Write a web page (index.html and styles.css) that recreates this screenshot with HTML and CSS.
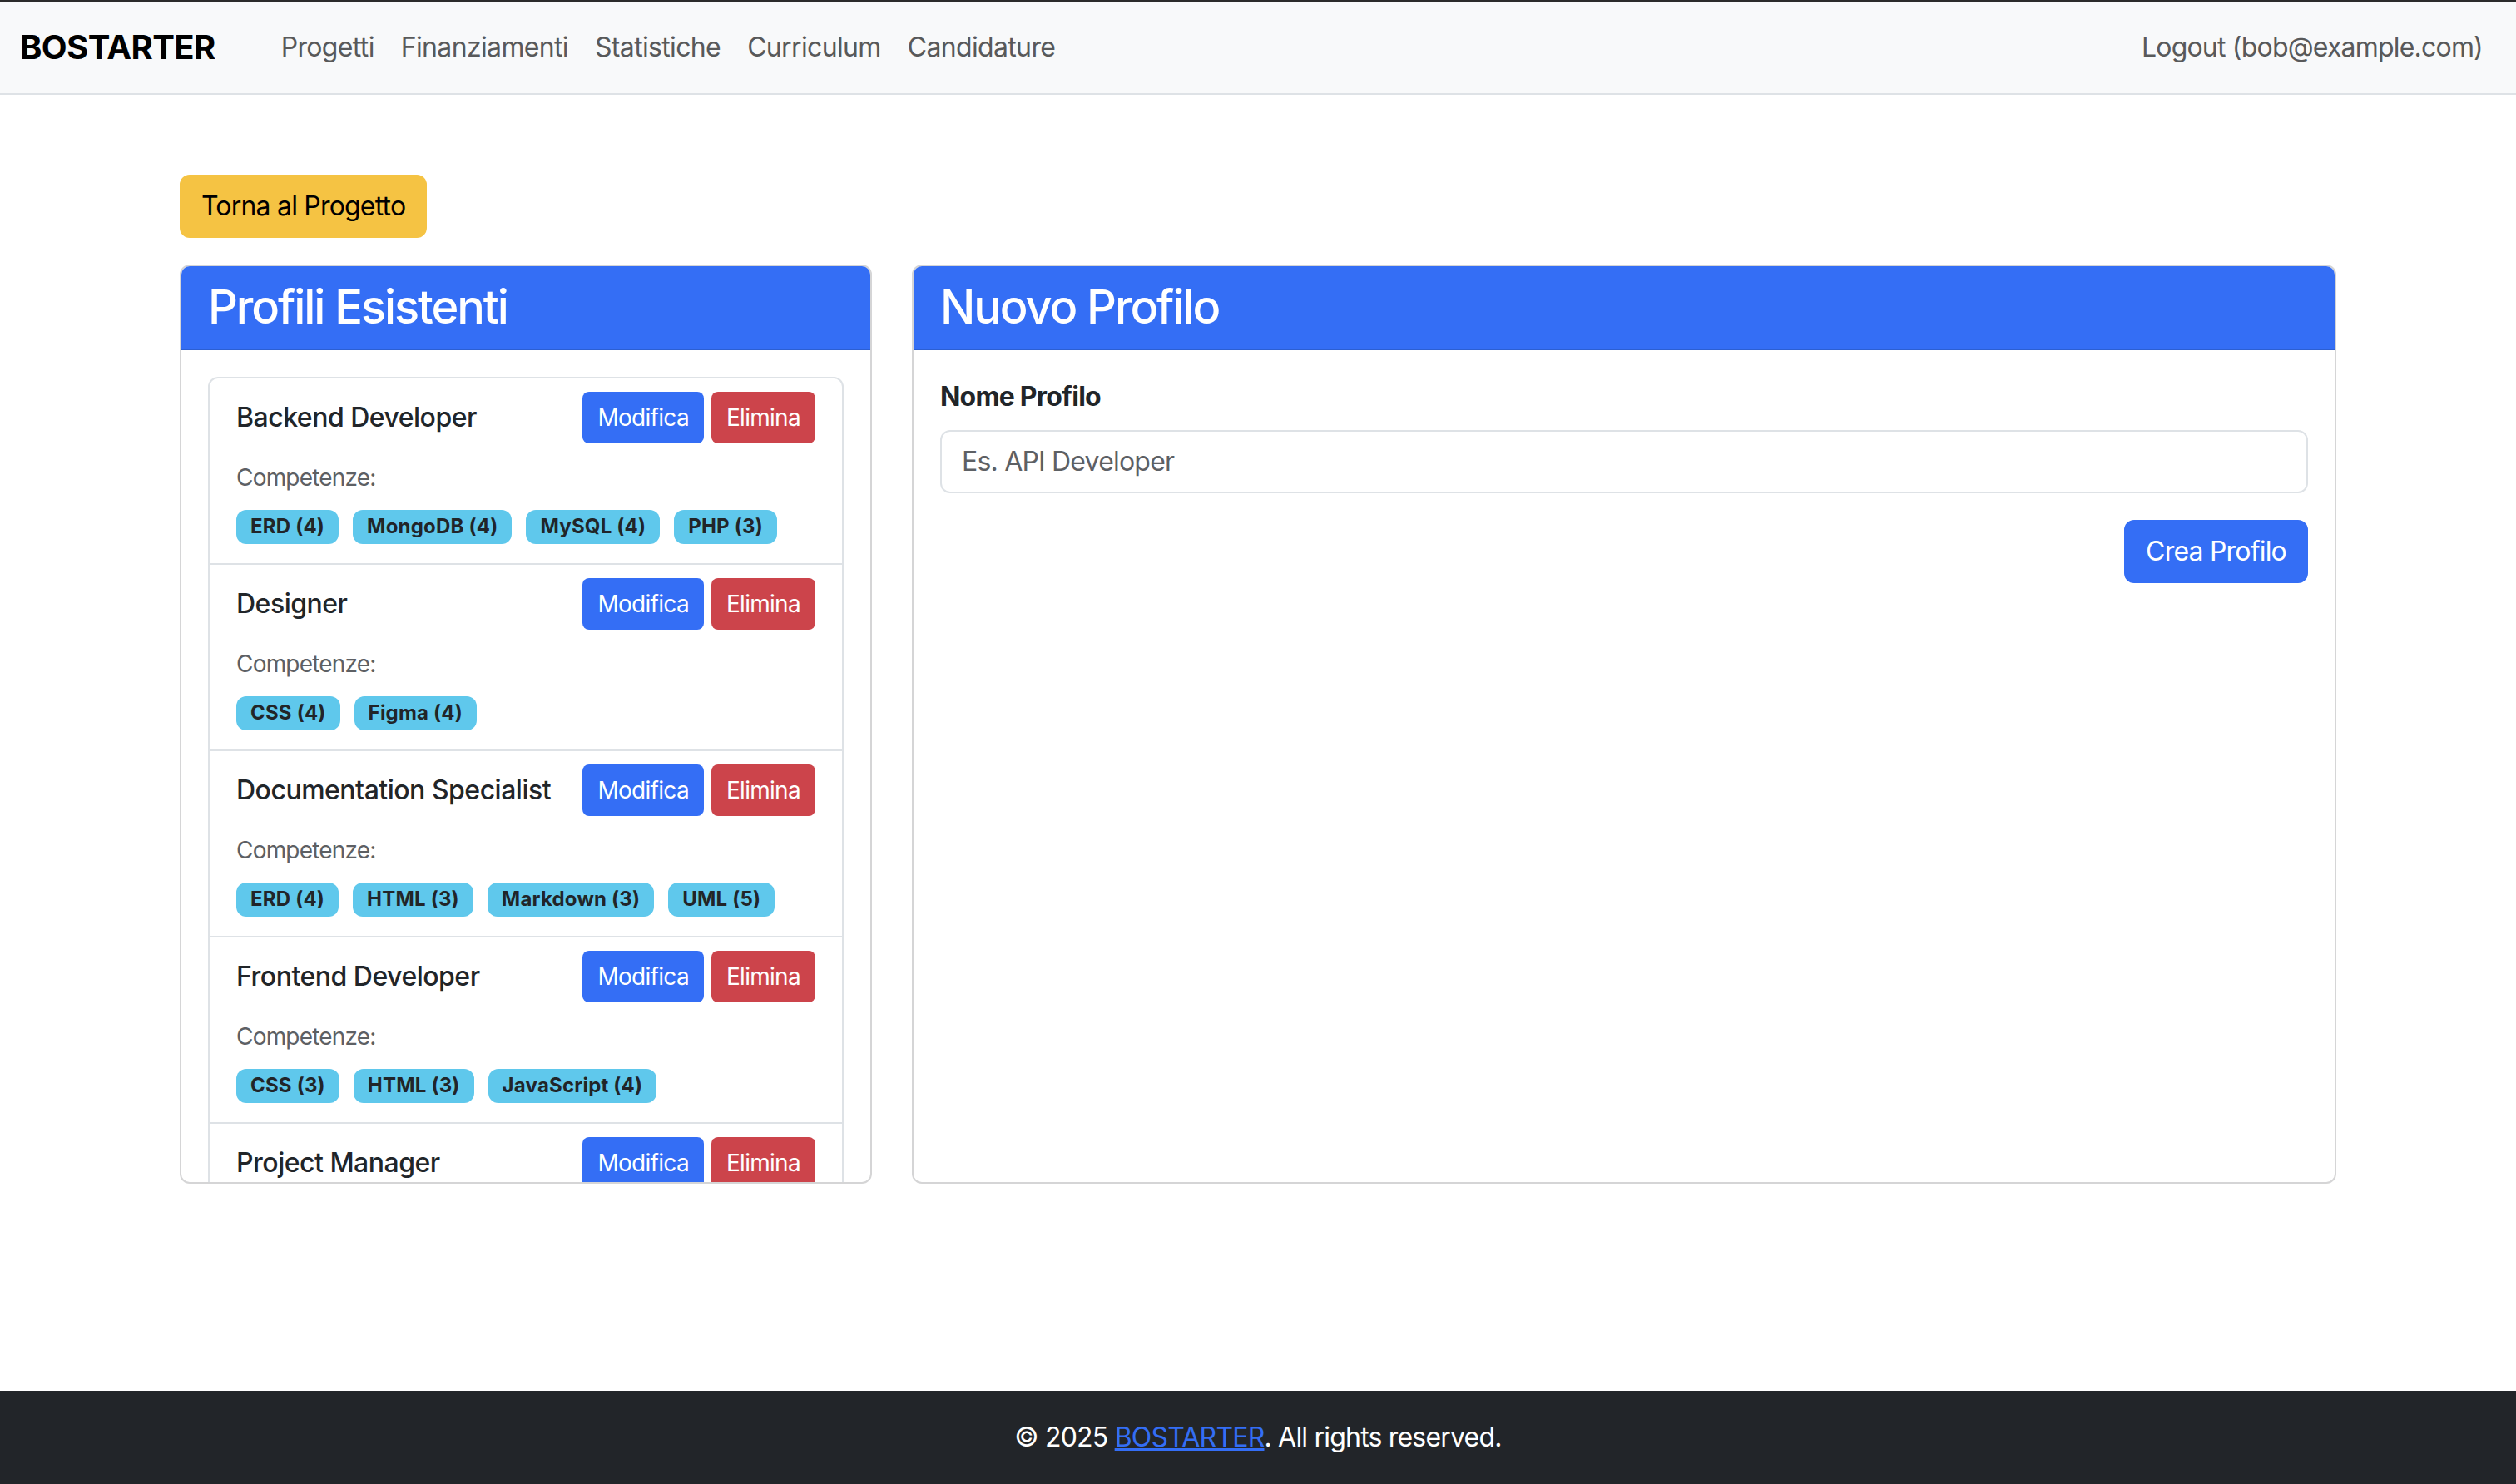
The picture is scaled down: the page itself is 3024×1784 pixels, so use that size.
FILE: index.html
```html
<!DOCTYPE html>
<html lang="it">
<head>
<meta charset="utf-8">
<title>BOSTARTER - Profili</title>
<link rel="stylesheet" href="styles.css">
</head>
<body>
<nav class="navbar">
  <a class="brand" href="#">BOSTARTER</a>
  <ul class="nav-links">
    <li><a href="#">Progetti</a></li>
    <li><a href="#">Finanziamenti</a></li>
    <li><a href="#">Statistiche</a></li>
    <li><a href="#">Curriculum</a></li>
    <li><a href="#">Candidature</a></li>
  </ul>
  <a class="nav-logout" href="#">Logout (bob@example.com)</a>
</nav>

<main class="container">
  <div class="back-row"><a class="btn btn-warning" href="#">Torna al Progetto</a></div>
  <div class="row">
    <section class="col-left">
      <div class="card">
        <div class="card-header"><h3>Profili Esistenti</h3></div>
        <div class="card-body card-scroll">
          <ul class="list-group">
            <li class="list-item">
              <div class="item-head">
                <h6>Backend Developer</h6>
                <div class="actions"><button class="btn-sm btn-primary">Modifica</button><button class="btn-sm btn-danger">Elimina</button></div>
              </div>
              <div class="skills-label"><small>Competenze:</small></div>
              <div class="skills"><span class="badge">ERD (4)</span><span class="badge">MongoDB (4)</span><span class="badge">MySQL (4)</span><span class="badge">PHP (3)</span></div>
            </li>
            <li class="list-item">
              <div class="item-head">
                <h6>Designer</h6>
                <div class="actions"><button class="btn-sm btn-primary">Modifica</button><button class="btn-sm btn-danger">Elimina</button></div>
              </div>
              <div class="skills-label"><small>Competenze:</small></div>
              <div class="skills"><span class="badge">CSS (4)</span><span class="badge">Figma (4)</span></div>
            </li>
            <li class="list-item">
              <div class="item-head">
                <h6>Documentation Specialist</h6>
                <div class="actions"><button class="btn-sm btn-primary">Modifica</button><button class="btn-sm btn-danger">Elimina</button></div>
              </div>
              <div class="skills-label"><small>Competenze:</small></div>
              <div class="skills"><span class="badge">ERD (4)</span><span class="badge">HTML (3)</span><span class="badge">Markdown (3)</span><span class="badge">UML (5)</span></div>
            </li>
            <li class="list-item">
              <div class="item-head">
                <h6>Frontend Developer</h6>
                <div class="actions"><button class="btn-sm btn-primary">Modifica</button><button class="btn-sm btn-danger">Elimina</button></div>
              </div>
              <div class="skills-label"><small>Competenze:</small></div>
              <div class="skills"><span class="badge">CSS (3)</span><span class="badge">HTML (3)</span><span class="badge">JavaScript (4)</span></div>
            </li>
            <li class="list-item">
              <div class="item-head">
                <h6>Project Manager</h6>
                <div class="actions"><button class="btn-sm btn-primary">Modifica</button><button class="btn-sm btn-danger">Elimina</button></div>
              </div>
            </li>
          </ul>
        </div>
      </div>
    </section>
    <section class="col-right">
      <div class="card card-full">
        <div class="card-header"><h3>Nuovo Profilo</h3></div>
        <div class="card-body">
          <form class="profile-form">
            <label class="form-label" for="nome">Nome Profilo</label>
            <input class="form-control" id="nome" type="text" placeholder="Es. API Developer">
            <div class="form-actions"><button type="button" class="btn btn-primary">Crea Profilo</button></div>
          </form>
        </div>
      </div>
    </section>
  </div>
</main>

<footer class="footer">
  <p>© 2025 <a href="#">BOSTARTER</a>. All rights reserved.</p>
</footer>
</body>
</html>
```
FILE: styles.css
```css
* { box-sizing: border-box; }

html, body { margin: 0; padding: 0; }

body {
  font-family: Inter, "Liberation Sans", sans-serif;
  font-size: 32px;
  line-height: 1.5;
  letter-spacing: -0.025em;
  color: #212529;
  background: #ffffff;
  min-height: 100vh;
  display: flex;
  flex-direction: column;
}

/* Navbar */
.navbar {
  display: flex;
  align-items: center;
  background: #f8f9fa;
  border-top: 2px solid #2b2b2b;
  border-bottom: 2px solid #dee2e6;
  padding: 15px 24px;
  height: 114px;
}
.brand {
  font-size: 40px;
  font-weight: 700;
  line-height: 1.5;
  color: #000;
  text-decoration: none;
  margin-right: 63px;
  letter-spacing: -0.6px;
}
.nav-links {
  display: flex;
  list-style: none;
  margin: 0;
  padding: 0;
}
.nav-links a {
  letter-spacing: -0.65px;
}
.nav-links a, .nav-logout {
  display: block;
  padding: 16px 16px;
  line-height: 48px;
  color: #58595a;
  text-decoration: none;
}
.nav-logout {
  margin-left: auto;
  padding-right: 16px;
}

/* Layout */
.container {
  width: 2592px;
  margin: 96px auto 0;
}
.back-row { margin-bottom: 32px; }
.row {
  display: flex;
  gap: 48px;
  align-items: stretch;
}
.col-left { width: 832px; flex: none; }
.col-right { flex: 1; display: flex; }

/* Buttons */
.btn {
  display: inline-block;
  font-family: inherit;
  font-size: 32px;
  line-height: 48px;
  letter-spacing: inherit;
  padding: 12px 24px;
  border: 2px solid transparent;
  border-radius: 12px;
  text-decoration: none;
  cursor: pointer;
}
.btn-warning { background: #f5c343; border-color: #f5c343; color: #000; }
.btn-primary { background: #346ef5; border-color: #346ef5; color: #fff; }
.btn-danger { background: #cc444b; border-color: #cc444b; color: #fff; }

.btn-sm {
  font-family: inherit;
  font-size: 28px;
  line-height: 42px;
  letter-spacing: -0.7px;
  padding: 8px 16px;
  border: 2px solid transparent;
  border-radius: 8px;
  cursor: pointer;
}

/* Cards */
.card {
  border: 2px solid #d5d5d6;
  border-radius: 12px;
  background: #fff;
  overflow: hidden;
  display: flex;
  flex-direction: column;
}
.card-full { flex: 1; }
.card-header {
  background: #346ef5;
  color: #fff;
  padding: 16px 32px;
  border-bottom: 2px solid #2c5fd2;
}
.card-header h3 {
  margin: 0;
  font-size: 56px;
  font-weight: 500;
  line-height: 1.2;
  letter-spacing: -2.1px;
}
.card-body { padding: 32px; }
.card-scroll {
  height: 1000px;
  overflow-y: auto;
  scrollbar-width: none;
}
.card-scroll::-webkit-scrollbar { display: none; }

/* List group */
.list-group {
  list-style: none;
  margin: 0;
  padding: 0;
  border: 2px solid #dee2e6;
  border-radius: 12px;
}
.list-item {
  padding: 16px 32px;
  border-bottom: 2px solid #dee2e6;
}
.list-item:last-child { border-bottom: none; }
.item-head {
  display: flex;
  justify-content: space-between;
  align-items: center;
}
.item-head h6 {
  margin: 0;
  font-size: 32px;
  font-weight: 500;
  line-height: 1.2;
  letter-spacing: -0.5px;
}
.actions { display: flex; gap: 9px; }
.skills-label {
  margin-top: 16px;
  color: #5d6064;
}
.skills-label small { font-size: 28px; }
.skills {
  margin-top: 16px;
  display: flex;
  flex-wrap: wrap;
  align-items: flex-start;
  gap: 0 17px;
  min-height: 48px;
}
.badge {
  display: inline-block;
  background: #5fc8ec;
  color: #212529;
  font-size: 24px;
  font-weight: 700;
  line-height: 1;
  letter-spacing: 0.2px;
  padding: 8px 17px 9px;
  border-radius: 12px;
}

/* Form */
.form-label {
  display: block;
  font-weight: 700;
  margin-bottom: 16px;
}
.form-control {
  display: block;
  width: 100%;
  font-family: inherit;
  font-size: 32px;
  line-height: 48px;
  letter-spacing: inherit;
  padding: 12px 24px;
  border: 2px solid #dee2e6;
  border-radius: 12px;
  color: #212529;
  background: #fff;
  margin-bottom: 32px;
}
.form-control::placeholder { color: #5d6064; }
.form-actions {
  display: flex;
  justify-content: flex-end;
}

/* Footer */
.footer {
  margin-top: auto;
  background: #222529;
  color: #fff;
  text-align: center;
  padding: 32px 0;
}
.footer p { margin: 0; }
.footer a { color: #346ef5; text-decoration: underline; }
```
